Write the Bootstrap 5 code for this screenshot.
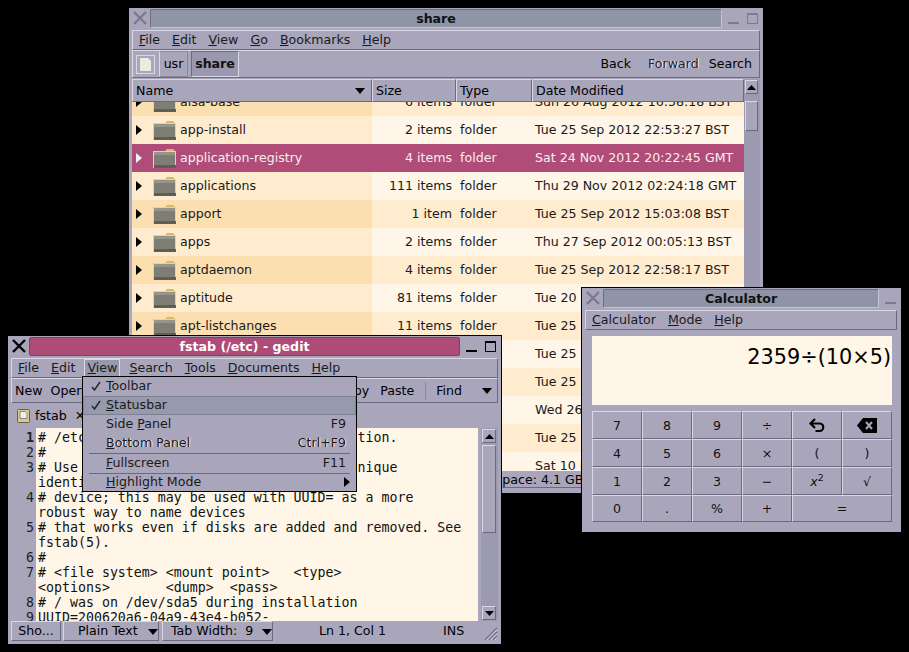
<!DOCTYPE html>
<html><head><meta charset="utf-8">
<link href="https://cdn.jsdelivr.net/npm/bootstrap@5.3.0/dist/css/bootstrap.min.css" rel="stylesheet">
<style>
html,body{margin:0;background:#000;height:652px;overflow:hidden}
body{font:12.6px/1.2 "DejaVu Sans",sans-serif;color:#000}
.win{position:absolute;background:#a9a6bc;border:1px solid #000;box-sizing:border-box;overflow:hidden}
.w-files{left:128px;top:7px;width:636px;height:487px;z-index:1}
.w-gedit{left:7px;top:335px;width:495px;height:310px;z-index:3}
.w-calc{left:581px;top:287px;width:321px;height:246px;z-index:2}
.tb{height:22px;padding:1px 5px 0 3px}
.tb .cl{width:16px;height:16px;flex:none;margin-top:2px}
.tb .ttl{flex:1;height:19px;margin:0 0 0 2px;background:#8f94a6;border:1px solid #6f6e80;border-right-color:#c7c5d4;border-bottom-color:#c7c5d4;border-radius:2px;font-weight:700;text-align:center;line-height:17px;color:#111}
.tb .ttl.act{background:#ad4c77;color:#fff;border-color:#8d3a60}
.wb{width:11px;height:11px;flex:none;margin-top:4px;box-sizing:border-box}
.wb.mn{margin-left:6px;border-bottom:2px solid var(--wc)}
.wb.mx{margin-left:8px;border:1px solid var(--wc);border-top-width:2px}
.mb{height:20px;border:1px solid;border-color:#dad8e4 #6b6a7c #6b6a7c #dad8e4;margin:0 3px;padding:0 6px;gap:12px;align-items:center}
.mb span{color:#1a1a1a}
.tbar{height:28px;border:1px solid;border-color:#dad8e4 #6b6a7c #6b6a7c #dad8e4;margin:0 3px;align-items:center}
.lst{margin:1px 3px 0 3px}
.hdr{height:23px;background:#a9a6bc}
.hc{border:1px solid;border-color:#dad8e4 #6b6a7c #6b6a7c #dad8e4;padding:0 3px;line-height:21px;flex:none}
.c1{width:240px;padding-right:6px}.c2{width:84px}.c3{width:76px}.c4{width:212px}
.rws{height:369px;overflow:hidden}
.r{height:28px;display:flex;align-items:center;flex:none;color:#1a1a1a;--ca:#ffeccf;--cb:#fff6e8}
.r:nth-child(odd){--ca:#fbdfb0;--cb:#ffeccf}
.r .a{width:240px;height:100%;background:var(--ca);display:flex;align-items:center;padding-left:3px}
.r .b{width:84px;text-align:right;padding-right:4px;background:var(--cb);height:100%;line-height:28px}
.r .c{width:76px;padding-left:4px;background:var(--cb);height:100%;line-height:28px}
.r .d{width:212px;padding-left:3px;background:var(--cb);height:100%;line-height:28px;white-space:nowrap;overflow:hidden}
.r.sel{--ca:#b04c78;--cb:#b04c78;color:#f5eef2}
.r.cut{height:14px}
.r.cut>*{overflow:hidden;line-height:0}
.ar{width:0;height:0;border-left:6px solid #000;border-top:5.5px solid transparent;border-bottom:5.5px solid transparent;margin:0 11px 0 1px;flex:none}
.sel .ar{border-left-color:#f5eef2}
.fo{width:23px;height:20px;margin-right:4px;flex:none}
.cutin{position:relative;height:28px;margin-top:-14px;display:flex;align-items:center;flex:1}
.u{text-decoration:underline}
.sb{background:#9c9ab0;flex:none;position:relative}
.sbb{height:14px;margin:1px 2px 0 1px;background:#a9a6bc;border:1px solid;border-color:#dad8e4 #6b6a7c #6b6a7c #dad8e4;display:flex;align-items:center;justify-content:center}
.thumb{position:absolute;left:1px;right:2px;background:#a9a6bc;border:1px solid;border-color:#dad8e4 #6b6a7c #6b6a7c #dad8e4}
.pthb{height:26px;border:1px solid #8a889c;border-left-color:#dad8e4;line-height:24px;flex:none;text-align:center}
.sunk{background:#9a98ae;border-color:#6b6a7c #dad8e4 #dad8e4 #6b6a7c;color:#111;font-weight:700}
.emb{color:#222;text-shadow:1px 0 0 #f4f4f8}
.fstat{height:17px;border-bottom:1px solid #6b6a7c;margin:0 3px;line-height:17px;padding-left:333px;white-space:nowrap}
.ed{font:13.28px/15px "DejaVu Sans Mono",monospace;margin:0 3px;height:193px}
.gut{width:25px;text-align:right;padding:2px 2px 0 0;background:#a9a6bc;flex:none;white-space:pre;color:#222}
.txt{flex:1;background:#fff6e8;white-space:pre;padding:2px 0 0 2px;overflow:hidden;color:#111}
.menu{position:absolute;left:74px;top:40px;width:275px;height:116px;background:#a9a6bc;border:1px solid #000;z-index:5;overflow:hidden}
.mi{height:19px;padding:0 10px 0 23px;line-height:18px;display:flex;justify-content:space-between;position:relative;color:#1a1a1a;white-space:nowrap}
.mi.h{background:#959bac;box-shadow:inset 0 0 0 1px #7f8092}
.ck{position:absolute;left:8px;top:4px}
.msp{height:1px;background:#6b6a7c;margin:0 6px}
.stt{height:20px;border:1px solid;border-color:#dad8e4 #6b6a7c #6b6a7c #dad8e4;line-height:18px;flex:none;white-space:nowrap}
.disp{height:69px;margin:6px 9px 0 10px;background:#fff6e8;text-align:right;font-size:20.8px;line-height:42px;padding-right:1px;color:#000}
.kgrid{display:grid;grid-template-columns:repeat(6,50px);grid-template-rows:28px 28px 28px 27px;margin:6px 0 0 10px}
.k{border:1px solid;border-color:#dad8e4 #6b6a7c #6b6a7c #dad8e4;text-align:center;line-height:25px;color:#111;display:flex;align-items:center;justify-content:center}
.k2{grid-column:span 2}
</style></head><body>

<div class="win w-files" style="--wc:#7c7a8e">
 <div class="tb d-flex"><svg class="cl" viewBox="0 0 16 16"><path d="M2 1L14 13M14 1L2 13" stroke="#7c7a8e" stroke-width="2.4"/></svg><div class="ttl">share</div><div class="wb mn"></div><div class="wb mx"></div></div>
 <div class="mb d-flex"><span><span class="u">F</span>ile</span><span><span class="u">E</span>dit</span><span><span class="u">V</span>iew</span><span><span class="u">G</span>o</span><span><span class="u">B</span>ookmarks</span><span><span class="u">H</span>elp</span></div>
 <div class="tbar d-flex">
  <div class="d-flex align-items-center justify-content-center flex-none" style="width:24px;height:26px;margin-right:1px"><svg width="19" height="19" viewBox="0 0 19 19"><rect x=".5" y=".5" width="18" height="18" fill="#a9a6bc" stroke="#dad8e4"/><path d="M4 3h8l3 3v10H4z" fill="#eeeade"/></svg></div>
  <div class="pthb" style="width:29px;margin-left:1px">usr</div><div class="pthb sunk" style="width:48px;margin-left:3px">share</div>
  <div class="flex-grow-1"></div>
  <span style="margin-right:17px">Back</span><span class="emb" style="margin-right:10px">Forward</span><span style="margin-right:7px">Search</span>
 </div>
 <div class="d-flex lst">
  <div class="flex-grow-1" style="min-width:0">
   <div class="hdr d-flex"><div class="hc c1 d-flex justify-content-between align-items-center">Name<svg width="10" height="6"><path d="M0 0H10L5 6z" fill="#000"/></svg></div><div class="hc c2">Size</div><div class="hc c3">Type</div><div class="hc c4">Date Modified</div></div>
   <div class="rws">
    <div class="r cut"><div class="a"><div class="cutin"><span class="ar"></span><svg class="fo" viewBox="0 0 23 20"><use href="#fold"/></svg><span>alsa-base</span></div></div><div class="b"><div class="cutin d-block" style="line-height:28px">6 items</div></div><div class="c"><div class="cutin d-block" style="line-height:28px">folder</div></div><div class="d"><div class="cutin d-block" style="line-height:28px">Sun 26 Aug 2012 16:58:18 BST</div></div></div>
    <div class="r"><div class="a"><span class="ar"></span><svg class="fo" viewBox="0 0 23 20"><use href="#fold"/></svg>app-install</div><div class="b">2 items</div><div class="c">folder</div><div class="d">Tue 25 Sep 2012 22:53:27 BST</div></div>
    <div class="r sel"><div class="a"><span class="ar"></span><svg class="fo" viewBox="0 0 23 20"><use href="#fold"/></svg>application-registry</div><div class="b">4 items</div><div class="c">folder</div><div class="d">Sat 24 Nov 2012 20:22:45 GMT</div></div>
    <div class="r"><div class="a"><span class="ar"></span><svg class="fo" viewBox="0 0 23 20"><use href="#fold"/></svg>applications</div><div class="b">111 items</div><div class="c">folder</div><div class="d">Thu 29 Nov 2012 02:24:18 GMT</div></div>
    <div class="r"><div class="a"><span class="ar"></span><svg class="fo" viewBox="0 0 23 20"><use href="#fold"/></svg>apport</div><div class="b">1 item</div><div class="c">folder</div><div class="d">Tue 25 Sep 2012 15:03:08 BST</div></div>
    <div class="r"><div class="a"><span class="ar"></span><svg class="fo" viewBox="0 0 23 20"><use href="#fold"/></svg>apps</div><div class="b">2 items</div><div class="c">folder</div><div class="d">Thu 27 Sep 2012 00:05:13 BST</div></div>
    <div class="r"><div class="a"><span class="ar"></span><svg class="fo" viewBox="0 0 23 20"><use href="#fold"/></svg>aptdaemon</div><div class="b">4 items</div><div class="c">folder</div><div class="d">Tue 25 Sep 2012 22:58:17 BST</div></div>
    <div class="r"><div class="a"><span class="ar"></span><svg class="fo" viewBox="0 0 23 20"><use href="#fold"/></svg>aptitude</div><div class="b">81 items</div><div class="c">folder</div><div class="d">Tue 20 Nov 2012 09:12:33 GMT</div></div>
    <div class="r"><div class="a"><span class="ar"></span><svg class="fo" viewBox="0 0 23 20"><use href="#fold"/></svg>apt-listchanges</div><div class="b">11 items</div><div class="c">folder</div><div class="d">Tue 25 Sep 2012 15:03:08 BST</div></div>
    <div class="r"><div class="a"></div><div class="b"></div><div class="c"></div><div class="d">Tue 25 Sep 2012 15:03:08 BST</div></div>
    <div class="r"><div class="a"></div><div class="b"></div><div class="c"></div><div class="d">Tue 25 Sep 2012 15:03:08 BST</div></div>
    <div class="r"><div class="a"></div><div class="b"></div><div class="c"></div><div class="d">Wed 26 Sep 2012 15:03:08 BST</div></div>
    <div class="r"><div class="a"></div><div class="b"></div><div class="c"></div><div class="d">Tue 25 Sep 2012 15:03:08 BST</div></div>
    <div class="r"><div class="a"></div><div class="b"></div><div class="c"></div><div class="d">Sat 10 Nov 2012 15:03:08 GMT</div></div>
   </div>
  </div>
  <div class="sb" style="width:16px"><div class="sbb"><svg width="9" height="5"><path d="M0 5L4.5 0L9 5z" fill="#000"/></svg></div><div class="thumb" style="top:22px;height:30px"></div></div>
 </div>
 <div class="fstat">Free space: 4.1 GB</div>
</div>

<div class="win w-gedit" style="--wc:#000">
 <div class="tb d-flex"><svg class="cl" viewBox="0 0 16 16"><path d="M2 1L14 13M14 1L2 13" stroke="#000" stroke-width="2.4"/></svg><div class="ttl act">fstab (/etc) - gedit</div><div class="wb mn"></div><div class="wb mx"></div></div>
 <div class="mb d-flex"><span><span class="u">F</span>ile</span><span><span class="u">E</span>dit</span><span style="background:#959bac;outline:1px solid #dad8e4;padding:0 2px;margin:0 -2px"><span class="u">V</span>iew</span><span><span class="u">S</span>earch</span><span><span class="u">T</span>ools</span><span><span class="u">D</span>ocuments</span><span><span class="u">H</span>elp</span></div>
 <div class="tbar d-flex" style="padding:0 5px 0 3px;height:25px"><span class="me-2">New</span><span>Open</span><div class="flex-grow-1"></div><span style="margin-right:11px">Copy</span><span style="margin-right:11px">Paste</span><span style="border-left:1px solid #8a889c;height:18px;margin-right:10px"></span><span>Find</span><svg width="10" height="6" style="margin-left:20px"><path d="M0 0H10L5 6z" fill="#000"/></svg></div>
 <div class="d-flex align-items-center" style="height:25px;padding-left:9px"><svg width="13" height="14" viewBox="0 0 13 14"><rect x=".5" y=".5" width="12" height="13" rx="1" fill="#dcc98a" stroke="#6b6040"/><path d="M3 2.500h5l2 2v5H3z" fill="#eee" stroke="#888"/></svg><span style="margin-left:5px">fstab</span><span class="ms-2 fw-bold">✕</span></div>
 <div class="d-flex ed">
  <div class="gut"><b>1</b>
2
3

4

5

6
7

8
9</div>
  <div class="txt"># /etc/fstab: static file system information.
#
# Use 'blkid' to print the universally unique
identifier for a
# device; this may be used with UUID= as a more
robust way to name devices
# that works even if disks are added and removed. See
fstab(5).
#
# &lt;file system&gt; &lt;mount point&gt;   &lt;type&gt;
&lt;options&gt;       &lt;dump&gt;  &lt;pass&gt;
# / was on /dev/sda5 during installation
UUID=200620a6-04a9-43e4-b052-</div>
  <div class="sb" style="width:20px;border-left:3px solid #a9a6bc"><div class="sbb"><svg width="9" height="5"><path d="M0 5L4.500 0L9 5z" fill="#000"/></svg></div><div class="thumb" style="top:17px;height:88px"></div><div class="sbb" style="position:absolute;left:0;right:0;bottom:1px;margin:0 2px 0 1px"><svg width="9" height="5"><path d="M0 0H9L4.500 5z" fill="#000"/></svg></div></div>
 </div>
 <div class="d-flex align-items-start" style="margin:0 3px;height:22px">
  <div class="stt text-center" style="width:50px">Sho...</div>
  <div class="stt" style="width:96px;margin-left:2px;padding-left:14px">Plain Text<svg width="10" height="6" style="margin-left:10px"><path d="M0 0H10L5 6z" fill="#000"/></svg></div>
  <div class="stt" style="width:111px;margin-left:3px;padding-left:8px">Tab Width:&nbsp; 9<svg width="10" height="6" style="margin-left:9px"><path d="M0 0H10L5 6z" fill="#000"/></svg></div>
  <div style="margin:1px 0 0 46px;line-height:18px;white-space:nowrap">Ln 1, Col 1</div><div style="margin:1px 0 0 57px;line-height:18px">INS</div>
  <svg class="ms-auto" style="margin-top:4px" width="16" height="16" viewBox="0 0 16 16"><path d="M15 3L3 15M15 7L7 15M15 11L11 15" stroke="#6b6a7c" stroke-width="1.300"/><path d="M15 4.500L4.500 15M15 8.500L8.500 15M15 12.500L12.500 15" stroke="#dad8e4"/></svg>
 </div>
 <div class="menu">
  <div class="mi"><svg class="ck" width="10" height="10"><path d="M1 6L3.500 9L9 1" fill="none" stroke="#222" stroke-width="1.400"/></svg><span><span class="u">T</span>oolbar</span></div>
  <div class="mi h"><svg class="ck" width="10" height="10"><path d="M1 6L3.500 9L9 1" fill="none" stroke="#222" stroke-width="1.400"/></svg><span><span class="u">S</span>tatusbar</span></div>
  <div class="mi"><span>Side <span class="u">P</span>anel</span><span>F9</span></div>
  <div class="mi emb"><span><span class="u">B</span>ottom Panel</span><span>Ctrl+F9</span></div>
  <div class="msp"></div>
  <div class="mi"><span><span class="u">F</span>ullscreen</span><span>F11</span></div>
  <div class="msp"></div>
  <div class="mi" style="height:17px;line-height:16px;padding-right:6px"><span><span class="u">H</span>ighlight Mode</span><svg width="6" height="10" style="margin-top:3px"><path d="M0 0L6 5L0 10z" fill="#000"/></svg></div>
 </div>
</div>

<div class="win w-calc" style="--wc:#7c7a8e">
 <div class="tb d-flex"><svg class="cl" viewBox="0 0 16 16"><path d="M2 1L14 13M14 1L2 13" stroke="#7c7a8e" stroke-width="2.4"/></svg><div class="ttl">Calculator</div><div class="wb mn"></div></div>
 <div class="mb d-flex" style="margin:0 4px 0 3px"><span><span class="u">C</span>alculator</span><span><span class="u">M</span>ode</span><span><span class="u">H</span>elp</span></div>
 <div class="disp">2359÷(10×5)</div>
 <div class="kgrid">
  <div class="k">7</div><div class="k">8</div><div class="k">9</div><div class="k">÷</div><div class="k"><svg width="16" height="15" viewBox="0 0 16 15"><path d="M6 1L1.500 5.500L6 10M2 5.500H10.500A3.700 3.700 0 0 1 10.500 13H6.500" fill="none" stroke="#000" stroke-width="2.200"/></svg></div><div class="k"><svg width="20" height="15" viewBox="0 0 20 15"><path d="M6 0H20V15H6L0 7.500z" fill="#000"/><path d="M9 4L15 11M15 4L9 11" stroke="#a9a6bc" stroke-width="2"/></svg></div>
  <div class="k">4</div><div class="k">5</div><div class="k">6</div><div class="k">×</div><div class="k">(</div><div class="k">)</div>
  <div class="k">1</div><div class="k">2</div><div class="k">3</div><div class="k">−</div><div class="k"><span><i>x</i><sup>2</sup></span></div><div class="k">√</div>
  <div class="k">0</div><div class="k">.</div><div class="k">%</div><div class="k">+</div><div class="k k2">=</div>
 </div>
</div>

<svg width="0" height="0" style="position:absolute"><defs><g id="fold"><path d="M12 3l2-2h6l2 2z" fill="#d9b860"/><rect x=".5" y="3.500" width="22" height="16" fill="#7f7e74" stroke="#d8d4c4"/><path d="M1 4h21v3H1z" fill="#96958a"/><path d="M1 17h22v3H1z" fill="#5f5e56"/></g></defs></svg>
</body></html>
